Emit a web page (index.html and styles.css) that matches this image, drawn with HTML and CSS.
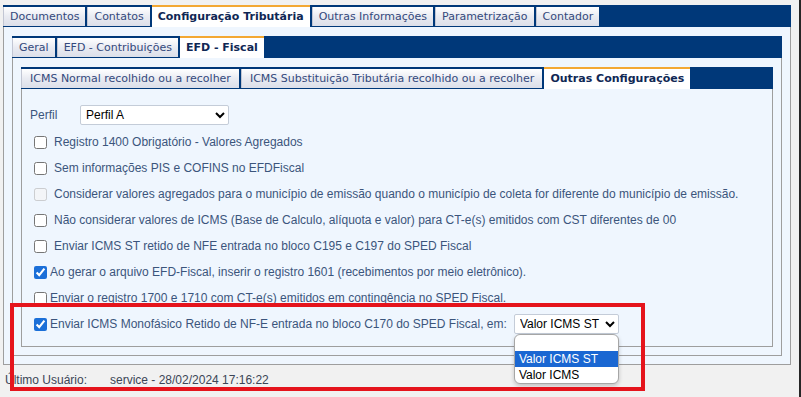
FILE: index.html
```html
<!DOCTYPE html>
<html lang="pt-BR">
<head>
  <meta charset="UTF-8" />
  <meta name="viewport" content="width=device-width, initial-scale=1.0"/>
  <title>Configuração Tributária - EFD Fiscal</title>
  <link rel="stylesheet" href="styles.css">
</head>
<body>
  <div class="page">
    <div class="tabset outer">
      <ul class="tab-bar">
        <li class="tab">Documentos</li>
        <li class="tab">Contatos</li>
        <li class="tab active">Configuração Tributária</li>
        <li class="tab">Outras Informações</li>
        <li class="tab">Parametrização</li>
        <li class="tab">Contador</li>
      </ul>
      <div class="tab-panel">

        <div class="tabset">
          <ul class="tab-bar">
            <li class="tab">Geral</li>
            <li class="tab">EFD - Contribuições</li>
            <li class="tab active">EFD - Fiscal</li>
          </ul>
          <div class="tab-panel">

            <div class="tabset">
              <ul class="tab-bar sub-tabs">
                <li class="tab">ICMS Normal recolhido ou a recolher</li>
                <li class="tab">ICMS Substituição Tributária recolhido ou a recolher</li>
                <li class="tab active">Outras Configurações</li>
              </ul>
              <div class="tab-panel form-panel">
                <div class="field-row">
                  <label class="field-label" for="perfil">Perfil</label>
                  <select id="perfil" class="perfil-select">
                    <option>Perfil A</option>
                  </select>
                </div>

                <div class="check-row">
                  <input type="checkbox" id="chk1">
                  <label class="check-text" for="chk1">Registro 1400 Obrigatório - Valores Agregados</label>
                </div>
                <div class="check-row">
                  <input type="checkbox" id="chk2">
                  <label class="check-text" for="chk2">Sem informações PIS e COFINS no EFDFiscal</label>
                </div>
                <div class="check-row">
                  <input type="checkbox" id="chk3" disabled>
                  <label class="check-text" for="chk3">Considerar valores agregados para o município de emissão quando o município de coleta for diferente do município de emissão.</label>
                </div>
                <div class="check-row">
                  <input type="checkbox" id="chk4">
                  <label class="check-text" for="chk4">Não considerar valores de ICMS (Base de Calculo, alíquota e valor) para CT-e(s) emitidos com CST diferentes de 00</label>
                </div>
                <div class="check-row">
                  <input type="checkbox" id="chk5">
                  <label class="check-text" for="chk5">Enviar ICMS ST retido de NFE entrada no bloco C195 e C197 do SPED Fiscal</label>
                </div>
                <div class="check-row tight">
                  <input type="checkbox" id="chk6" checked>
                  <label class="check-text" for="chk6">Ao gerar o arquivo EFD-Fiscal, inserir o registro 1601 (recebimentos por meio eletrônico).</label>
                </div>
                <div class="check-row tight">
                  <input type="checkbox" id="chk7">
                  <label class="check-text" for="chk7">Enviar o registro 1700 e 1710 com CT-e(s) emitidos em contingência no SPED Fiscal.</label>
                </div>
                <div class="check-row tight">
                  <input type="checkbox" id="chk8" checked>
                  <label class="check-text" for="chk8">Enviar ICMS Monofásico Retido de NF-E entrada no bloco C170 do SPED Fiscal, em:</label>
                  <div class="select-wrap">
                    <select class="valor-select">
                      <option>Valor ICMS ST</option>
                    </select>
                    <ul class="select-popup">
                      <li class="popup-option">&nbsp;</li>
                      <li class="popup-option selected">Valor ICMS ST</li>
                      <li class="popup-option">Valor ICMS</li>
                    </ul>
                  </div>
                </div>
              </div>
            </div>

          </div>
        </div>

      </div>
    </div>

    <div class="last-user">
      <span class="last-user-label">Último Usuário:</span>
      <span>service - 28/02/2024 17:16:22</span>
    </div>

    <div class="highlight-box"></div>
  </div>
</body>
</html>
```

FILE: styles.css
```css
html, body {
  margin: 0;
  padding: 0;
}

body {
  background: #f1f1f1;
  width: 801px;
  height: 397px;
  box-sizing: border-box;
  border-right: 2px solid #262626;
  overflow: hidden;
}

.page {
  position: relative;
  padding: 5px 0 0 3px;
  height: 100%;
  box-sizing: border-box;
}

/* Tabs */
.tabset.outer {
  width: 788px;
}

.tab-bar {
  display: flex;
  align-items: flex-end;
  gap: 2px;
  height: 22px;
  margin: 0;
  padding: 0;
  list-style: none;
  background: #003879;
}

.tab {
  height: 19px;
  margin-bottom: 1px;
  padding: 0 6px;
  box-sizing: border-box;
  font-family: "DejaVu Sans", Verdana, sans-serif;
  font-size: 11px;
  line-height: 19px;
  color: #34497c;
  white-space: nowrap;
  background: linear-gradient(#ffffff, #e9ebf2 50%, #dcdfe9);
  border-left: 1px solid #c2c6d3;
}

.sub-tabs .tab {
  padding: 0 8px;
}

.tab.active,
.sub-tabs .tab.active {
  height: 22px;
  margin-bottom: 0;
  padding: 0 6px;
  line-height: 20px;
  border-left: none;
  border-top: 2px solid #f3a833;
  background: #ffffff;
  color: #0f2754;
  font-weight: bold;
}

.tab-panel {
  background: #eff6fe;
  border: 1px solid #9e9e9e;
  border-top: none;
  padding: 9px 8px 8px 8px;
}

/* Form */
.form-panel {
  padding: 16px 8px 9px 8px;
  font-family: "Liberation Sans", Arial, sans-serif;
  font-size: 12px;
  color: #3b557c;
}

.field-row {
  display: flex;
  align-items: center;
  height: 20px;
  margin-bottom: 4px;
}

.field-label {
  width: 50px;
}

select {
  font-family: "Liberation Sans", Arial, sans-serif;
  font-size: 12px;
  color: #000;
  height: 20px;
  padding: 0 1px;
  background: #ffffff;
  border: 1px solid #c4ccd8;
  border-radius: 2px;
}

.perfil-select {
  width: 149px;
}

.check-row {
  display: flex;
  align-items: center;
  height: 26px;
  white-space: nowrap;
}

.check-row input {
  width: 13px;
  height: 13px;
  margin: 0 3px 0 4px;
  accent-color: #1b6fd8;
}

.check-text {
  margin-left: 4px;
}

.check-row.tight .check-text {
  margin-left: 0;
}

.select-wrap {
  position: relative;
  margin-left: 7px;
}

.valor-select {
  width: 105px;
}

.select-popup {
  position: absolute;
  top: 20px;
  left: 0;
  width: 105px;
  margin: 0;
  padding: 0;
  list-style: none;
  background: #ffffff;
  border: 1px solid #a6a6a6;
  border-radius: 6px;
  box-shadow: 0 2px 4px rgba(0, 0, 0, 0.2);
  overflow: hidden;
  box-sizing: border-box;
}

.popup-option {
  height: 16px;
  line-height: 16px;
  padding-left: 4px;
  color: #000;
  font-size: 12px;
}

.popup-option.selected {
  background: #1a67d2;
  color: #ffffff;
}

/* Footer */
.last-user {
  display: flex;
  margin-top: 8px;
  padding-left: 2px;
  font-family: "Liberation Sans", Arial, sans-serif;
  font-size: 12px;
  line-height: 14px;
  color: #3b4556;
}

.last-user-label {
  width: 105px;
}

/* Annotation */
.highlight-box {
  position: absolute;
  left: 10px;
  top: 303px;
  width: 635px;
  height: 88px;
  border: 4px solid #e5141c;
  box-sizing: border-box;
  pointer-events: none;
}
```
